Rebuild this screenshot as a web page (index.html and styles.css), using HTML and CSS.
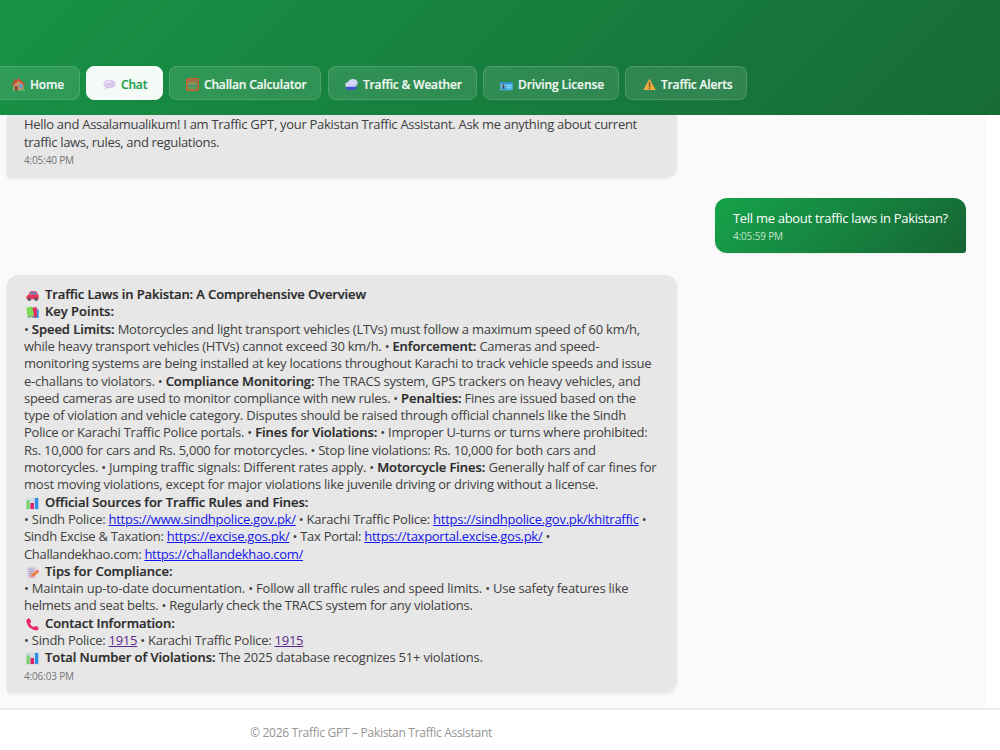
FILE: index.html
```
<!DOCTYPE html>
<html lang="en">
<head>
<meta charset="utf-8">
<title>Traffic GPT</title>
<link rel="stylesheet" href="styles.css">
</head>
<body>
<svg class="defs" width="0" height="0">
  <symbol id="chart" viewBox="0 0 14 14">
    <rect x="0" y="0.5" width="13.5" height="13" fill="#d3dbe6"/>
    <rect x="0.6" y="3.5" width="3.4" height="9.5" fill="#7bd46a"/>
    <rect x="4.8" y="6.5" width="3.8" height="6.5" fill="#e0246a"/>
    <rect x="9.6" y="1" width="3.6" height="12" fill="#2f8fe6"/>
  </symbol>
</svg>
<div class="app">
  <header class="header">
    <nav class="nav">
      <a class="tab home"><svg viewBox="0 0 14 14"><path d="M1.500 6.500 7 2l5.500 5v6.500h-11z" fill="#c98f68"/><path d="M2 1.500h2.200v4L2 7z" fill="#b5533c"/><path d="M.5 7.500 7 1.500l6.500 6" fill="none" stroke="#c9492f" stroke-width="1.700"/><path d="M3.200 8.800H6v4.700H3.200z" fill="#744436"/><path d="M7.800 7h3.200v3H7.800z" fill="#37a7ee"/><path d="M0 12h2.500v2H0zM8.500 12.500H14V14H8.500z" fill="#51b55c"/></svg><span>Home</span></a>
      <a class="tab chat active"><svg viewBox="0 0 14 14"><path d="M7 2c4 0 6.500 2 6.500 4.500S11 11 7 11c-.8 0-1.500 0-2.200-.3L2 12.500l.6-2.900C1.200 8.800.5 7.800.5 6.500.5 4 3 2 7 2z" fill="#d6c6ea"/><path d="M2.800 6C3.600 4.200 6 3.400 9 3.800" fill="none" stroke="#eee8f8" stroke-width="1.600"/></svg><span>Chat</span></a>
      <a class="tab calc"><svg viewBox="0 0 14 14"><rect x=".8" y=".8" width="12.400" height="12.400" rx="1" fill="#5f8a50" stroke="#d0602d" stroke-width="1.500"/><path d="M2 3.300h10" stroke="#e9534b" stroke-width="1.800" stroke-dasharray="1.500 1"/><path d="M2 5.800h10" stroke="#e2a23b" stroke-width="1.400" stroke-dasharray="1.500 1"/><path d="M2 8.200h10" stroke="#3d9fd0" stroke-width="1.400" stroke-dasharray="1.500 1"/><path d="M2 10.700h10" stroke="#6bc160" stroke-width="1.400" stroke-dasharray="1.500 1"/></svg><span>Challan Calculator</span></a>
      <a class="tab weather"><svg viewBox="0 0 14 14"><path d="M2 9h10v3.500H1z" fill="#4252e4"/><path d="M3.500 10.500v2M6.500 10.500v2M9.500 10.500v2" stroke="#2637be" stroke-width=".8"/><path d="M3.200 9.800C1.400 9.800.3 8.700.3 7.200.3 5.600 1.600 4.400 3.300 4.500 4 2.400 6 1.200 8.600 1.200c3 0 5 1.700 5 4.100S11.700 9.800 9 9.800z" fill="#d5d5f7"/><path d="M2.500 8.800c3 .8 8 .4 10-1.800" stroke="#b5b1e9" stroke-width="1.200" fill="none"/></svg><span>Traffic &amp; Weather</span></a>
      <a class="tab license"><svg viewBox="0 0 14 14"><rect x=".2" y="4.300" width="13.600" height="9" fill="#42aee4"/><path d="M.2 4.300h13.600v1.500H.2z" fill="#258cc8"/><rect x="1.200" y="6.600" width="4.800" height="5" fill="#8fc4e0"/><path d="M2 11.500c0-3 3.300-3 3.300 0z" fill="#304f7b"/><circle cx="3.600" cy="8" r="1.300" fill="#5a4a48"/><path d="M7.500 8.200h4.800M7.500 10.500h4.800" stroke="#b2e4fa"/></svg><span>Driving License</span></a>
      <a class="tab alerts"><svg viewBox="0 0 14 14"><path d="M7 .8 13.700 13H.3z" fill="#f2a93f"/><path d="M7 4.500v4.800M7 10.300v1.600" stroke="#574c3a" stroke-width="1.300"/></svg><span>Traffic Alerts</span></a>
    </nav>
  </header>
  <main class="log">
    <section class="msg bot first">
      <p class="k30">Hello and Assalamualikum! I am Traffic GPT, your Pakistan Traffic Assistant. Ask me anything about current</p>
      <p class="k32">traffic laws, rules, and regulations.</p>
      <time>4:05:40 PM</time>
    </section>
    <section class="msg user">
      <p class="k30">Tell me about traffic laws in Pakistan?</p>
      <time>4:05:59 PM</time>
    </section>
    <section class="msg bot">
      <p class="title k12"><svg viewBox="0 0 14 14"><path d="M2.500 6 5 2.500h6L12.800 6z" fill="#dd3150"/><path d="M4 6 5.700 3.600h1.800V6zM8.400 3.600h2L11.600 6H8.400z" fill="#40a9ed"/><path d="M.5 7.500 3 5.800h10l.7 1.200v4H.5z" fill="#e63a58"/><circle cx="3.600" cy="11" r="1.800" fill="#4b435d"/><circle cx="10.800" cy="11" r="1.800" fill="#4b435d"/><path d="M3.100 11h1M10.300 11h1" stroke="#c4bfd2"/></svg><b>Traffic Laws in Pakistan: A Comprehensive Overview</b></p>
      <p class="title"><svg viewBox="0 0 14 14"><path d="M10 3.500h3.700V13H7z" fill="#3b9bea"/><path d="m6.500 2 5-.8.500 10.300-5 1z" fill="#e22d60"/><path d="M.4 1.500 6.800.6l2 10.200-7 1.500z" fill="#7ed957"/><path d="m1.600 11.800 6.800-1.500.300 1-6.500 1.700z" fill="#9297a0"/></svg><b>Key Points:</b></p>
      <p class="k23">• <b>Speed Limits:</b> Motorcycles and light transport vehicles (LTVs) must follow a maximum speed of 60 km/h,</p>
      <p class="k25">while heavy transport vehicles (HTVs) cannot exceed 30 km/h. • <b>Enforcement:</b> Cameras and speed-</p>
      <p class="k25">monitoring systems are being installed at key locations throughout Karachi to track vehicle speeds and issue</p>
      <p class="k21">e-challans to violators. • <b>Compliance Monitoring:</b> The TRACS system, GPS trackers on heavy vehicles, and</p>
      <p class="k29">speed cameras are used to monitor compliance with new rules. • <b>Penalties:</b> Fines are issued based on the</p>
      <p class="k23">type of violation and vehicle category. Disputes should be raised through official channels like the Sindh</p>
      <p class="k25">Police or Karachi Traffic Police portals. • <b>Fines for Violations:</b> • Improper U-turns or turns where prohibited:</p>
      <p class="k25">Rs. 10,000 for cars and Rs. 5,000 for motorcycles. • Stop line violations: Rs. 10,000 for both cars and</p>
      <p class="k23">motorcycles. • Jumping traffic signals: Different rates apply. • <b>Motorcycle Fines:</b> Generally half of car fines for</p>
      <p class="k23">most moving violations, except for major violations like juvenile driving or driving without a license.</p>
      <p class="title k07"><svg><use href="#chart"/></svg><b>Official Sources for Traffic Rules and Fines:</b></p>
      <p class="k25">• Sindh Police: <a>https://www.sindhpolice.gov.pk/</a> • Karachi Traffic Police: <a>https://sindhpolice.gov.pk/khitraffic</a> •</p>
      <p class="k29">Sindh Excise &amp; Taxation: <a>https://excise.gos.pk/</a> • Tax Portal: <a>https://taxportal.excise.gos.pk/</a> •</p>
      <p class="k32">Challandekhao.com: <a>https://challandekhao.com/</a></p>
      <p class="title"><svg viewBox="0 0 14 14"><path d="M1.500 1h9.500v12.500H1.500z" fill="#d8cde4"/><path d="M3 3.500h6M3 5.800h6M3 8h4M3 10.300h2" stroke="#9b91b0" stroke-width=".9"/><path d="m5 12 1-3.200 5.500-4.300 2.200 2.300-5.500 4.500z" fill="#f0783f"/><path d="m11.500 4.500 1-.7 1.500 2-.8.900z" fill="#e14768"/></svg><b>Tips for Compliance:</b></p>
      <p class="k21">• Maintain up-to-date documentation. • Follow all traffic rules and speed limits. • Use safety features like</p>
      <p class="k25">helmets and seat belts. • Regularly check the TRACS system for any violations.</p>
      <p class="title k07"><svg viewBox="0 0 14 14"><path d="M.6 1.600 2.800.4c1.700.6 2.700 2.200 2.700 4L4.200 5.800C5.200 7.600 6.500 8.900 8.200 9.800l1.700-1.300c1.900.1 3.300 1.100 3.900 2.700l-1.300 2C6.500 14.500-.6 8 .6 1.600z" fill="#e92b6c"/></svg><b>Contact Information:</b></p>
      <p class="k25">• Sindh Police: <a class="seen">1915</a> • Karachi Traffic Police: <a class="seen">1915</a></p>
      <p class="k21"><svg><use href="#chart"/></svg><b>Total Number of Violations:</b> The 2025 database recognizes 51+ violations.</p>
      <time>4:06:03 PM</time>
    </section>
  </main>
  <footer class="footer">© 2026 Traffic GPT – Pakistan Traffic Assistant</footer>
</div>
</body>
</html>
```
FILE: styles.css
```
* { box-sizing: border-box; }
body {
  margin: 0;
  background: #fff;
  font-family: "Open Sans", "Noto Sans", sans-serif;
  font-size: 13px;
  color: #404040;
}
.defs { position: absolute; }
.app {
  display: flex;
  flex-direction: column;
  height: 750px;
  overflow: hidden;
}

/* header */
.header {
  flex: none;
  height: 115px;
  padding-top: 66px;
  overflow: hidden;
  background: linear-gradient(135deg, #179345, #176b37);
}
.nav {
  display: flex;
  gap: 6px;
  margin-left: -7px;
}
.tab {
  display: flex;
  align-items: center;
  flex: none;
  height: 34px;
  border: 1px solid rgba(255, 255, 255, .14);
  border-radius: 8px;
  background: rgba(255, 255, 255, .11);
  color: #f1f8f3;
  font-size: 12px;
  font-weight: 600;
  letter-spacing: -.18px;
  -webkit-text-stroke: .2px;
  white-space: nowrap;
  padding: 2px 0 0 17px;
}
.tab svg { width: 13px; height: 13px; margin-right: 6px; }
.tab.active {
  background: #f4faf6;
  border-color: #f4faf6;
  color: #21a04f;
}
.home { width: 87px; padding-left: 18px; }
.home svg { margin-right: 5px; }
.chat { width: 77px; padding-left: 16px; }
.chat svg { margin-right: 5px; }
.calc { width: 152px; padding-left: 16px; margin-right: 1px; }
.calc svg { margin-right: 5px; }
.weather { width: 149px; padding-left: 16px; }
.weather svg { margin-right: 5px; }
.license { width: 136px; padding-left: 16px; letter-spacing: -.11px; }
.license svg { margin-right: 5px; }
.alerts { width: 122px; }
.alerts svg { margin-right: 5px; }

/* conversation */
.log {
  flex: 1;
  min-height: 0;
  width: 986px;
  padding: 0 20px 0 7px;
  display: flex;
  flex-direction: column;
  background: #fafafa;
}
.msg {
  flex: none;
  border-radius: 12px;
  padding: 11.600px 17px 0;
  box-shadow: 0 1px 3px rgba(0, 0, 0, .07);
}
.msg p {
  margin: 0;
  height: 17.3px;
  line-height: 17.3px;
  white-space: nowrap;
}
.msg time {
  display: block;
  margin-top: 2px;
  font-size: 10px;
  line-height: 14px;
  letter-spacing: -.15px;
  color: #747474;
}
.bot {
  width: 670px;
  background: #e7e7e7;
  border-bottom-left-radius: 3px;
  height: 418px;
}
.first {
  height: 63px;
  padding-top: 1.400px;
  border-top-left-radius: 0;
  border-top-right-radius: 0;
}
.user {
  align-self: flex-end;
  width: 251px;
  height: 55px;
  margin: 20px 0 21.500px;
  padding: 11.500px 17px 0 18px;
  border-bottom-right-radius: 3px;
  background: linear-gradient(135deg, #16a34a, #166534);
  color: #fff;
}
.user time { color: #c3e3cd; }
.msg svg {
  width: 13px;
  height: 13px;
  margin: 0 6px 0 2px;
  vertical-align: -3px;
}
.msg b {
  font-weight: 600;
  color: #2b2b2b;
  letter-spacing: -.06px;
  -webkit-text-stroke: .2px;
}
.msg .title b { letter-spacing: inherit; }
.msg a { color: #1414ee; text-decoration: underline; }
.msg a.seen { color: #5c2a8e; }

/* tracking steps */
.k07 { letter-spacing: -.07px; }
.k12 { letter-spacing: -.117px; }
.k21 { letter-spacing: -.205px; }
.k23 { letter-spacing: -.225px; }
.k25 { letter-spacing: -.25px; }
.k29 { letter-spacing: -.284px; }
.k30 { letter-spacing: -.297px; }
.k32 { letter-spacing: -.322px; }

.footer {
  flex: none;
  height: 42px;
  padding: 14px 0 0 250px;
  border-top: 2px solid #ececec;
  background: #fff;
  font-size: 12px;
  line-height: 18px;
  letter-spacing: -.287px;
  color: #949494;
}
```
